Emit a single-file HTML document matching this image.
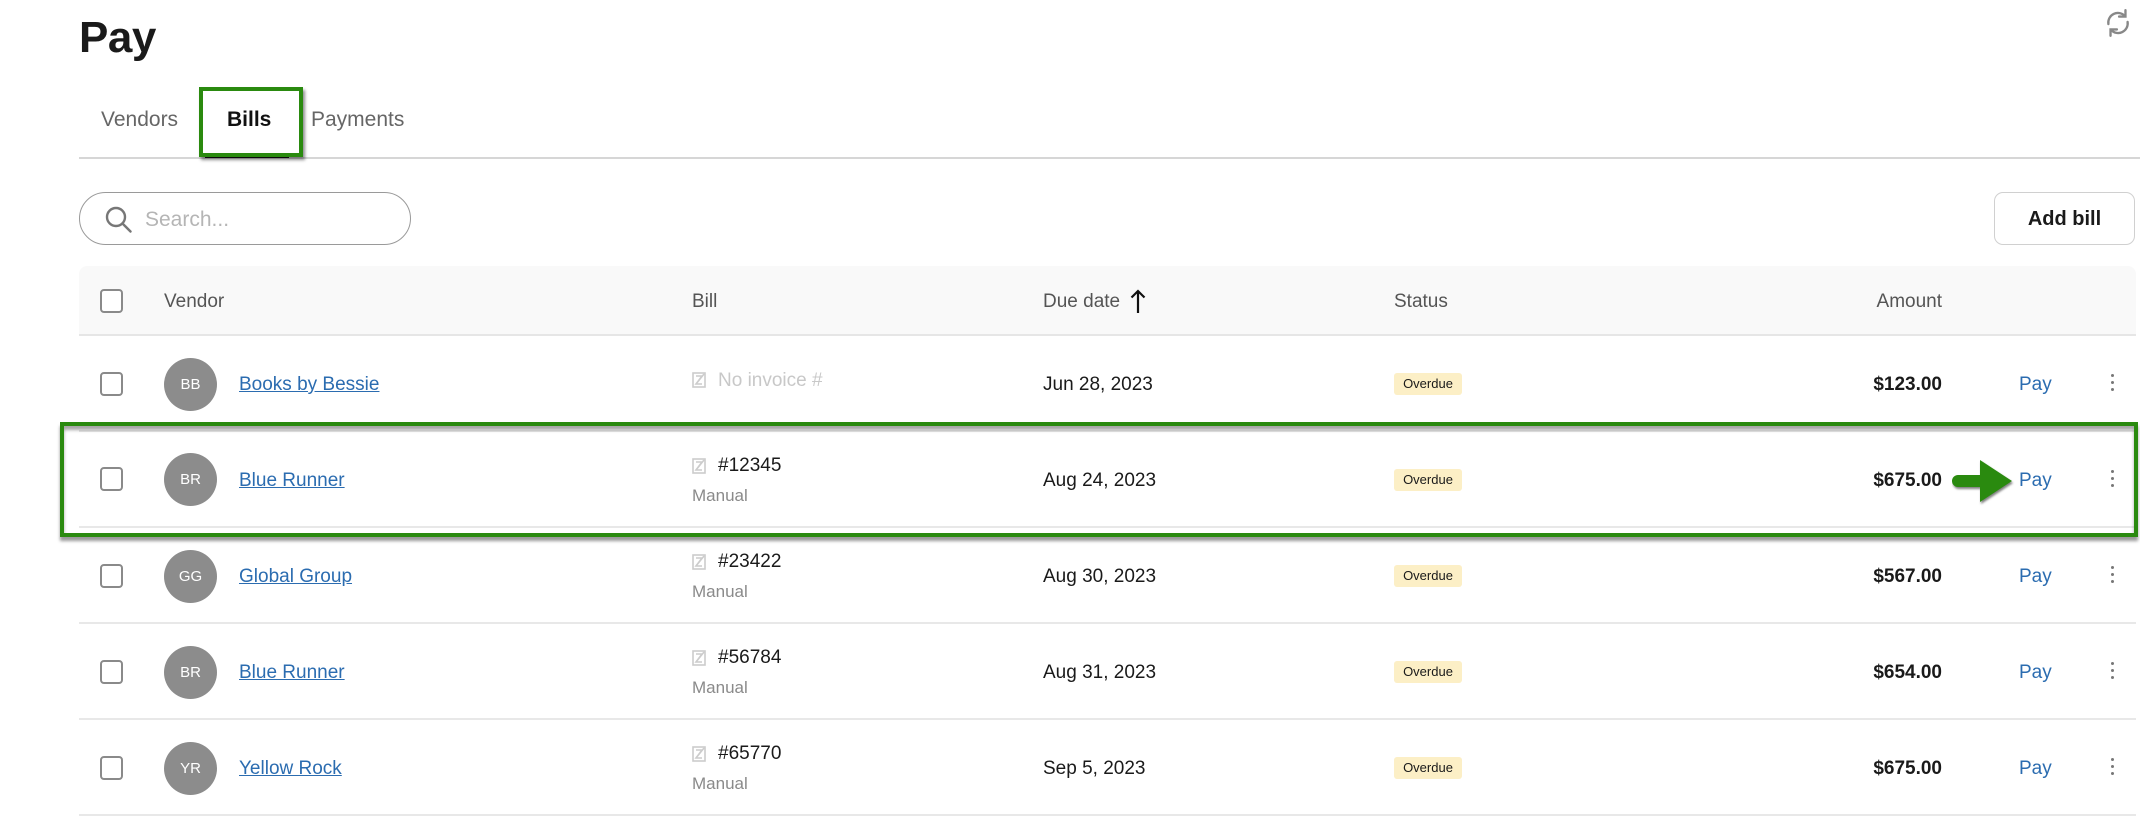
<!DOCTYPE html>
<html><head><meta charset="utf-8">
<style>
*{margin:0;padding:0;box-sizing:border-box}
body{width:2140px;height:818px;background:#fff;font-family:"Liberation Sans",sans-serif;color:#1a1a1a;position:relative;overflow:hidden}
.a{position:absolute}
.title{left:79px;top:13px;font-size:44px;font-weight:600;letter-spacing:-0.5px}
.tab{top:108px;font-size:21px;color:#666}
.tabline{left:79px;top:157px;width:2061px;height:2px;background:#d6d6d6}
.search{left:79px;top:192px;width:332px;height:53px;border:1px solid #9a9a9a;border-radius:27px}
.addbill{left:1994px;top:192px;width:141px;height:53px;border:1px solid #d0d0d0;border-radius:9px;font-size:20px;font-weight:600;text-align:center;line-height:53px}
.hdr{left:79px;top:266px;width:2057px;height:70px;background:#f9f9f9;border-bottom:2px solid #e6e6e6;border-radius:8px 8px 0 0}
.hd{top:291px;font-size:19px;color:#555}
.cb{width:23px;height:24px;border:2px solid #8a8a8a;border-radius:4px;background:#fff}
.row{left:79px;width:2057px;height:96px;border-bottom:2px solid #e8e8e8}
.av{left:164px;width:53px;height:53px;border-radius:50%;background:#8c8c8c;color:#fff;font-size:15px;text-align:center;line-height:53px}
.ven{left:239px;font-size:19px;color:#2b6cb0;text-decoration:underline}
.bill{left:718px;font-size:19px}
.man{left:692px;font-size:17px;color:#8a8a8a}
.bic{left:692px;width:15px;height:16px}
.date{left:1043px;font-size:19px}
.badge{left:1394px;width:68px;height:22px;background:#fcefc6;border-radius:3px;font-size:13px;text-align:center;line-height:22px}
.amt{right:198px;font-size:19px;font-weight:700}
.pay{left:2019px;font-size:19px;color:#2b6cb0}
.keb{left:2111px;width:4px}
.keb i{display:block;width:3px;height:3px;border-radius:50%;background:#777;margin-bottom:4px}
</style></head><body>
<div class="a title">Pay</div>
<svg class="a" style="left:2102px;top:7px" width="32" height="32" viewBox="0 0 30 30" fill="none" stroke="#888" stroke-width="2.2" stroke-linecap="round"><path d="M6 16a9 9 0 0 1 15.5-7.5"/><path d="M22 3v6h-6"/><path d="M24 14a9 9 0 0 1-15.5 7.5"/><path d="M8 27v-6h6"/></svg>

<div class="a tab" style="left:101px">Vendors</div>
<div class="a tab" style="left:227px;color:#111;font-weight:600">Bills</div>
<div class="a tab" style="left:311px">Payments</div>
<div class="a tabline"></div>
<div class="a" style="left:205px;top:154px;width:84px;height:4px;background:#111"></div>
<div class="a" style="left:199px;top:87px;width:104px;height:70px;border:4px solid #2a8a0f;box-shadow:2px 3px 3px rgba(0,0,0,.45)"></div>

<div class="a search"></div>
<svg class="a" style="left:104px;top:205px" width="30" height="30" viewBox="0 0 30 30" fill="none" stroke="#777" stroke-width="2.4"><circle cx="12" cy="12" r="9"/><path d="M18.5 18.5l8 8" stroke-linecap="round"/></svg>
<div class="a" style="left:145px;top:208px;font-size:21px;color:#b5b5b5">Search...</div>
<div class="a addbill">Add bill</div>

<div class="a hdr"></div>
<div class="a cb" style="left:100px;top:289px"></div>
<div class="a hd" style="left:164px">Vendor</div>
<div class="a hd" style="left:692px">Bill</div>
<div class="a hd" style="left:1043px">Due date</div>
<svg class="a" style="left:1130px;top:288px" width="16" height="26" viewBox="0 0 16 26" fill="none" stroke="#111" stroke-width="2.2"><path d="M8 25V3M1.5 9.5L8 3l6.5 6.5"/></svg>
<div class="a hd" style="left:1394px">Status</div>
<div class="a hd" style="right:198px">Amount</div>

<div class="a row" style="top:336px"></div>
<div class="a row" style="top:432px"></div>
<div class="a row" style="top:528px"></div>
<div class="a row" style="top:624px"></div>
<div class="a row" style="top:720px"></div>

<div class="a cb" style="left:100px;top:372px"></div>
<div class="a av" style="top:358px">BB</div>
<div class="a ven" style="top:374px">Books by Bessie</div>
<svg class="a bic" style="top:372px" viewBox="0 0 15 16" fill="none" stroke="#ccc" stroke-width="1.6"><rect x="1" y="1" width="12" height="14"/><path d="M4 4h6L4 12h6M12 2l-8 10"/></svg>
<div class="a" style="left:718px;top:370px;font-size:19px;color:#c8c8c8">No invoice #</div>
<div class="a date" style="top:374px">Jun 28, 2023</div>
<div class="a badge" style="top:373px">Overdue</div>
<div class="a amt" style="top:374px">$123.00</div>
<div class="a pay" style="top:374px">Pay</div>
<div class="a keb" style="top:374px"><i></i><i></i><i></i></div>

<div class="a cb" style="left:100px;top:467px"></div>
<div class="a av" style="top:453px">BR</div>
<div class="a ven" style="top:470px">Blue Runner</div>
<svg class="a bic" style="top:458px" viewBox="0 0 15 16" fill="none" stroke="#ccc" stroke-width="1.6"><rect x="1" y="1" width="12" height="14"/><path d="M4 4h6L4 12h6M12 2l-8 10"/></svg>
<div class="a bill" style="top:455px">#12345</div>
<div class="a man" style="top:486px">Manual</div>
<div class="a date" style="top:470px">Aug 24, 2023</div>
<div class="a badge" style="top:469px">Overdue</div>
<div class="a amt" style="top:470px">$675.00</div>
<div class="a pay" style="top:470px">Pay</div>
<div class="a keb" style="top:470px"><i></i><i></i><i></i></div>

<div class="a cb" style="left:100px;top:564px"></div>
<div class="a av" style="top:550px">GG</div>
<div class="a ven" style="top:566px">Global Group</div>
<svg class="a bic" style="top:554px" viewBox="0 0 15 16" fill="none" stroke="#ccc" stroke-width="1.6"><rect x="1" y="1" width="12" height="14"/><path d="M4 4h6L4 12h6M12 2l-8 10"/></svg>
<div class="a bill" style="top:551px">#23422</div>
<div class="a man" style="top:582px">Manual</div>
<div class="a date" style="top:566px">Aug 30, 2023</div>
<div class="a badge" style="top:565px">Overdue</div>
<div class="a amt" style="top:566px">$567.00</div>
<div class="a pay" style="top:566px">Pay</div>
<div class="a keb" style="top:566px"><i></i><i></i><i></i></div>

<div class="a cb" style="left:100px;top:660px"></div>
<div class="a av" style="top:646px">BR</div>
<div class="a ven" style="top:662px">Blue Runner</div>
<svg class="a bic" style="top:650px" viewBox="0 0 15 16" fill="none" stroke="#ccc" stroke-width="1.6"><rect x="1" y="1" width="12" height="14"/><path d="M4 4h6L4 12h6M12 2l-8 10"/></svg>
<div class="a bill" style="top:647px">#56784</div>
<div class="a man" style="top:678px">Manual</div>
<div class="a date" style="top:662px">Aug 31, 2023</div>
<div class="a badge" style="top:661px">Overdue</div>
<div class="a amt" style="top:662px">$654.00</div>
<div class="a pay" style="top:662px">Pay</div>
<div class="a keb" style="top:662px"><i></i><i></i><i></i></div>

<div class="a cb" style="left:100px;top:756px"></div>
<div class="a av" style="top:742px">YR</div>
<div class="a ven" style="top:758px">Yellow Rock</div>
<svg class="a bic" style="top:746px" viewBox="0 0 15 16" fill="none" stroke="#ccc" stroke-width="1.6"><rect x="1" y="1" width="12" height="14"/><path d="M4 4h6L4 12h6M12 2l-8 10"/></svg>
<div class="a bill" style="top:743px">#65770</div>
<div class="a man" style="top:774px">Manual</div>
<div class="a date" style="top:758px">Sep 5, 2023</div>
<div class="a badge" style="top:757px">Overdue</div>
<div class="a amt" style="top:758px">$675.00</div>
<div class="a pay" style="top:758px">Pay</div>
<div class="a keb" style="top:758px"><i></i><i></i><i></i></div>

<div class="a" style="left:60px;top:422px;width:2078px;height:115px;border:4px solid #2a8a0f;box-shadow:0 4px 3px rgba(0,0,0,.4), inset 0 4px 3px rgba(0,0,0,.35)"></div>
<svg class="a" style="left:1952px;top:456px" width="66" height="50" viewBox="0 0 66 50"><g style="filter:drop-shadow(1px 2px 1px rgba(0,0,0,.5))"><path d="M6 19h22V4l32 21-32 21V31H6a6 6 0 0 1 0-12z" fill="#2a8a0f"/></g></svg>
</body></html>
